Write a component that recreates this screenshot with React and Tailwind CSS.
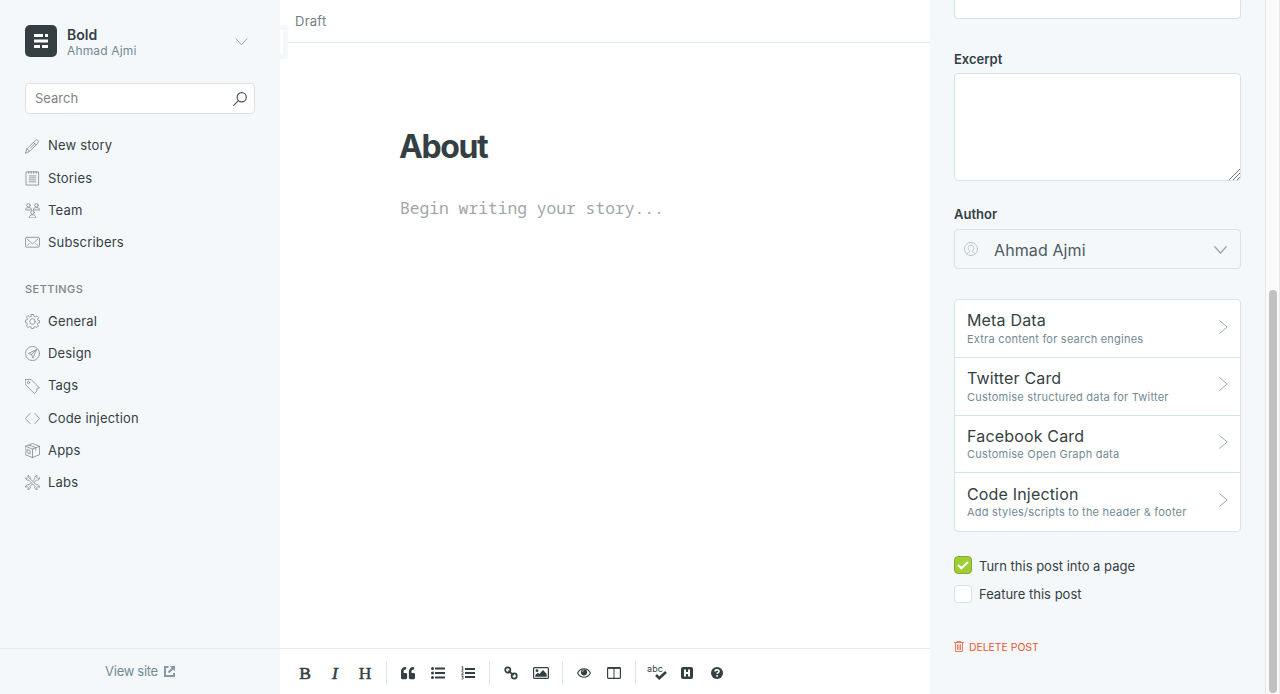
import React from "react";
import { FaQuoteLeft } from "react-icons/fa";

const Icon = ({ children, className = "size-[15px]", sw = 2, box = "0 0 32 32" }) => (
  <svg viewBox={box} className={className} fill="none" stroke="currentColor" strokeWidth={sw} strokeLinejoin="round" strokeLinecap="round" aria-hidden="true">
    {children}
  </svg>
);

const icons = {
  pen: (
    <>
      <path d="M1 30l3-9L21 4c2-2.500 4-3 6-1.500s2 4 0 6.500L10 26z" />
      <path d="M4 21l6 5M18 7l5 5M21 10l-9 9" />
    </>
  ),
  stories: (
    <>
      <path d="M3 2h26v28H3zM8 1v4M13.300 1v4M18.600 1v4M24 1v4" />
      <path d="M9 10.500h14M9 14.700h14M9 19h14M9 23.200h14" />
    </>
  ),
  team: (
    <>
      <circle cx="7.500" cy="5" r="3.800" />
      <circle cx="24.500" cy="5" r="3.800" />
      <circle cx="16" cy="20" r="3.800" />
      <path d="M1 14c0-3 2.500-4 5-4h3c2.500 0 5 1 5 4zM31 14c0-3-2.500-4-5-4h-3c-2.500 0-5 1-5 4zM9 31c0-4 3-5 5.500-6h3c2.500 1 5.500 2 5.500 6z" />
    </>
  ),
  mail: (
    <>
      <rect x="1" y="5" width="30" height="21" rx="3" />
      <path d="M5 9l11 10L27 9M5 22l4-4M27 22l-4-4" />
    </>
  ),
  gear: (
    <>
      <circle cx="16" cy="16" r="6" />
      <path d="M13.500 1h5l.8 4.200 2.700 1.100L25.600 4 29 7.400 26.700 11l1.100 2.700 3.200.8v4l-3.500.8-1.100 2.700 2.300 3.600-3.400 3.400-3.600-2.300-2.700 1.100-.8 3.200h-4.400l-.8-3.200-2.700-1.100L6.400 29 3 25.600 5.300 22l-1.100-2.700L1 18.500v-5l3.200-.8L5.300 10 3 6.400 6.400 3 10 6.300l2.700-1.100z" />
    </>
  ),
  design: (
    <>
      <circle cx="16" cy="16" r="15" />
      <path d="M24 8L7 16l7 2 2.500 7zM24 8L14 18" />
    </>
  ),
  tag: (
    <>
      <path d="M1 1h12l18 18-5.500 1v5.500L20 31 1 12z" />
      <circle cx="7.500" cy="7.500" r="2.500" />
    </>
  ),
  code: <path d="M11 5L1 16l10 11M21 5l10 11-10 11" />,
  apps: (
    <>
      <path d="M1 7l15-6 15 6v18l-15 6L1 25zM1 7l15 6 15-6M16 13v18M8 4l15 6v5M5 14l6 2v7l-6-2z" />
    </>
  ),
  labs: (
    <>
      <path d="M11 8l13 13c3-1 7 1 7 5l-4-1-2 2 1 4c-4 0-6-3-5-7L8 11c-3 1-6-1-7-5l4 1 2-2-1-4c4 0 6 4 5 7z" />
      <path d="M17 12l4-4c-1-4 1-7 5-7l-1 4 2 2 4-1c0 4-3 6-7 5l-4 4M12 17l-4 4c-4-1-7 1-7 5l4-1 2 2-1 4c4 0 6-3 5-7l4-4" />
    </>
  ),
};

const NavRow = ({ icon, children }) => (
  <div className="flex h-[32.200px] items-center gap-2 text-[13px] tracking-[0.180px] text-[#343f44]">
    <span className="text-[#7d878a]"><Icon sw={1.700}>{icons[icon]}</Icon></span>
    <span>{children}</span>
  </div>
);

const Tool = ({ children }) => <span className="flex h-5 w-[30px] items-center justify-center">{children}</span>;
const Rule = () => <span className="mx-[6px] h-6 w-px bg-[#dbe7ef]" />;

const Sidebar = () => (
  <aside className="flex h-full w-[280px] shrink-0 flex-col bg-[#f4f8fb]">
    <div className="mt-[25px] flex h-8 items-center px-[25px]">
      <div className="flex size-8 items-center justify-center rounded-[5px] bg-[#343f44]">
        <svg viewBox="0 0 14 14" className="size-[14px]" fill="#fff">
          <path d="M0 0h9v3H0zM11 0h3v3h-3zM0 5.500h14v3H0zM0 11h6v3H0zM8 11h6v3H8z" />
        </svg>
      </div>
      <div className="ml-[10px] flex flex-1 flex-col pt-[3px]">
        <span className="text-[14px] leading-4 font-semibold text-[#343f44]">Bold</span>
        <span className="text-[12px] leading-4 tracking-[0.150px] text-[#738a94]">Ahmad Ajmi</span>
      </div>
      <Icon className="mt-px mr-[7px] h-[8px] w-[13px] text-[#98a3a8]" box="0 0 13 8" sw={1}><path d="M1 .8l5.500 6L12 .8" /></Icon>
    </div>
    <div className="mx-[25px] mt-[26px] flex h-[31px] items-center justify-between rounded-[4px] border border-[#dfe1e3] bg-white pr-[7px] pl-[9px] text-[13px] text-[#808284]">
      <span>Search</span>
      <Icon className="size-[14px] text-[#4c575c]" box="0 0 14 14" sw={1.200}><circle cx="8.700" cy="5.300" r="4.600" /><path d="M5.300 8.700L.7 13.300" /></Icon>
    </div>
    <nav className="mt-[16px] px-[25px]">
      <NavRow icon="pen">New story</NavRow>
      <NavRow icon="stories">Stories</NavRow>
      <NavRow icon="team">Team</NavRow>
      <NavRow icon="mail">Subscribers</NavRow>
    </nav>
    <div className="mt-[22.200px] h-4 px-[25px] text-[11px] leading-4 font-medium tracking-[0.450px] text-[#808284]">SETTINGS</div>
    <nav className="mt-[8.700px] px-[25px]">
      <NavRow icon="gear">General</NavRow>
      <NavRow icon="design">Design</NavRow>
      <NavRow icon="tag">Tags</NavRow>
      <NavRow icon="code">Code injection</NavRow>
      <NavRow icon="apps">Apps</NavRow>
      <NavRow icon="labs">Labs</NavRow>
    </nav>
    <div className="mt-auto flex h-[46px] items-center justify-center gap-[6px] border-t border-[#dfebf2] text-[13px] tracking-[-0.300px] text-[#738a94]">
      <span className="pt-px">View site</span>
      <svg viewBox="0 0 11 11" className="size-[11px]" fill="none" stroke="#8499a3" strokeWidth="2">
        <path d="M4.500 1H1v9h9V7" /><path d="M4.500 6.500L9 2" /><path d="M5.800 0H11v5.200z" fill="#8499a3" stroke="none" />
      </svg>
    </div>
  </aside>
);

const Toolbar = () => (
  <div className="flex h-[46px] items-center border-t border-[#e3edf3] pt-[3px] pl-[10px] text-[#343f44]">
    <Tool><span className="font-['Liberation_Serif',serif] text-[17.500px] leading-5 [-webkit-text-stroke:0.6px]">B</span></Tool>
    <Tool><span className="font-['Liberation_Serif',serif] text-[17.500px] leading-5 italic [-webkit-text-stroke:0.6px]">I</span></Tool>
    <Tool><span className="font-['Liberation_Serif',serif] text-[17.500px] leading-5 [-webkit-text-stroke:0.4px]">H</span></Tool>
    <Rule />
    <Tool><FaQuoteLeft className="size-[14px]" /></Tool>
    <Tool>
      <svg viewBox="0 0 14 12" className="h-3 w-[14px]" fill="currentColor">
        <circle cx="1.500" cy="1.500" r="1.500" /><circle cx="1.500" cy="6" r="1.500" /><circle cx="1.500" cy="10.500" r="1.500" />
        <path d="M4 .5h10v2H4zM4 5h10v2H4zM4 9.500h10v2H4z" />
      </svg>
    </Tool>
    <Tool>
      <svg viewBox="0 0 14 14" className="size-[14px]" fill="currentColor">
        <path d="M4 2h10v2H4zM4 6h10v2H4zM4 10h10v2H4z" />
        <path d="M.5 1L1.700.5v3.300M.5 4h2M.4 5.700c1-.8 2-.2 1.800.6L.6 8.300h2M.4 10h1.900L1.500 11.300c1.400.2 1.100 2.200-1 1.700" fill="none" stroke="currentColor" strokeWidth=".9" />
      </svg>
    </Tool>
    <Rule />
    <Tool>
      <Icon className="size-[14px]" box="0 0 14 14" sw={1.700}>
        <circle cx="3.800" cy="4" r="2.600" /><circle cx="10.200" cy="10" r="2.600" /><path d="M5 5.200l4 3.700" />
      </Icon>
    </Tool>
    <Tool>
      <svg viewBox="0 0 16 12" className="h-3 w-4">
        <rect x=".6" y=".6" width="14.800" height="10.800" rx="1" fill="none" stroke="currentColor" strokeWidth="1.200" />
        <circle cx="4" cy="3.700" r="1.400" fill="currentColor" /><path d="M2.300 9.800V8l2.500-2.300 1.500 1.400L10 3l3.700 4v2.800z" fill="currentColor" />
      </svg>
    </Tool>
    <Rule />
    <Tool>
      <svg viewBox="0 0 14 10" className="h-[10px] w-[14px]">
        <path d="M.6 5C3.500-.6 10.500-.6 13.400 5 10.500 10.600 3.500 10.600.6 5z" fill="none" stroke="currentColor" strokeWidth="1.100" />
        <circle cx="7" cy="4.300" r="3.100" fill="currentColor" /><path d="M5.300 4.200c0-1 .7-1.700 1.700-1.700" fill="none" stroke="#fff" strokeWidth=".7" />
      </svg>
    </Tool>
    <Tool>
      <svg viewBox="0 0 14 12" className="h-3 w-[14px]" fill="none" stroke="currentColor">
        <rect x=".6" y=".6" width="12.800" height="10.800" rx=".8" strokeWidth="1.200" /><path d="M1 1h12" strokeWidth="1.800" /><path d="M7 1v10" strokeWidth="1" />
      </svg>
    </Tool>
    <Rule />
    <Tool>
      <span className="relative block h-[18px] w-5">
        <span className="absolute -top-[2px] left-0 text-[9px] leading-[14px] tracking-[0.100px]">abc</span>
        <svg viewBox="0 0 12 9" className="absolute right-0 bottom-[2px] h-[9px] w-3" fill="none" stroke="currentColor" strokeWidth="2.600"><path d="M1 4l3.300 3.200L11 1" /></svg>
      </span>
    </Tool>
    <Tool>
      <svg viewBox="0 0 12 12" className="size-3"><rect width="12" height="12" rx="2" fill="currentColor" /><path d="M4 2.500v7M8 2.500v7M4 6h4" stroke="#fff" strokeWidth="2" /></svg>
    </Tool>
    <Tool>
      <svg viewBox="0 0 12 12" className="size-3"><circle cx="6" cy="6" r="6" fill="currentColor" /><path d="M4 4.500C4.100 2.300 8 2.300 8 4.400c0 1.300-1.900 1.300-1.900 2.700M6.100 8v1.700" fill="none" stroke="#fff" strokeWidth="1.600" /></svg>
    </Tool>
  </div>
);

const Editor = () => (
  <main className="flex h-full w-[650px] shrink-0 flex-col bg-white">
    <header className="relative h-[43px] shrink-0 border-b border-[#dfebf2] pl-[15px] text-[13px] leading-[43px] tracking-[0.250px] text-[#738085]">
      Draft
      <span className="absolute top-[25px] left-0 h-[34px] w-2 rounded-r-[4px] bg-[#f4f8fb] py-[5px]"><span className="block h-6 w-[3px] bg-white" /></span>
    </header>
    <div className="flex-1 px-[120px] pt-[84px]">
      <h1 className="-ml-px text-[32px] leading-10 font-bold tracking-[-1.400px] text-[#343f44]">About</h1>
      <p className="mt-[29px] font-['Noto_Sans_Mono','DejaVu_Sans_Mono',monospace] text-[16.300px] leading-6 text-[#a0a6a9]">Begin writing your story...</p>
    </div>
    <Toolbar />
  </main>
);

const cards = [
  ["Meta Data", "Extra content for search engines"],
  ["Twitter Card", "Customise structured data for Twitter"],
  ["Facebook Card", "Customise Open Graph data"],
  ["Code Injection", "Add styles/scripts to the header & footer"],
];

const Settings = () => (
  <section className="flex h-full w-[335px] shrink-0 flex-col bg-[#f4f8fb] pr-6 pl-6 text-[#343f44]">
    <div className="h-[19px] w-full shrink-0 rounded-b-[4px] border border-t-0 border-[#d5e3eb] bg-white" />
    <div className="mt-[32px] h-4 text-[13px] leading-4 font-semibold">Excerpt</div>
    <div className="mt-[6px] flex h-[108px] items-end justify-end rounded-[4px] border border-[#d5e3eb] bg-white">
      <svg viewBox="0 0 11 11" className="size-[11px]" stroke="#777" strokeWidth="1"><path d="M0 11L11 0M4 11l7-7M8 11l3-3" /></svg>
    </div>
    <div className="mt-[25px] h-4 text-[13px] leading-4 font-semibold">Author</div>
    <div className="mt-[7px] flex h-10 items-center rounded-[4px] border border-[#d5e3eb] pr-[13px] pl-[9px]">
      <Icon className="size-[14px] text-[#b4c0c6]"><circle cx="16" cy="16" r="15" /><path d="M7 27c0-4 6-2 6-6-5-5-4-14 3-14s8 9 3 14c0 4 6 2 6 6" /></Icon>
      <span className="ml-[16px] flex-1 pt-[2px] text-[16px] leading-6 tracking-[0.100px] text-[#4d5a60]">Ahmad Ajmi</span>
      <Icon className="mt-[2px] h-[8px] w-[13px] text-[#98a9b3]" box="0 0 13 8" sw={1.400}><path d="M.8.8l5.700 6.200L12.200.8" /></Icon>
    </div>
    <div className="mt-[30px] h-[233px] shrink-0 divide-y divide-[#d5e3eb] rounded-[4px] border border-[#d5e3eb] bg-white">
      {cards.map(([title, sub]) => (
        <div key={title} className="flex h-[57.800px] items-start justify-between pt-[10.300px] pr-3 pl-3">
          <div>
            <div className="text-[16px] leading-[20.500px] tracking-[0.170px]">{title}</div>
            <div className="text-[11px] leading-[17px] tracking-[0.220px] text-[#738a94]">{sub}</div>
          </div>
          <Icon className="mt-[9.300px] h-[14px] w-[9px] shrink-0 text-[#98a9b3]" box="0 0 9 14" sw={1}><path d="M.7.7L8.200 7 .7 13.300" /></Icon>
        </div>
      ))}
    </div>
    <div className="mt-6 flex h-[18px] items-center gap-[7px] text-[13px]">
      <span className="flex size-[18px] items-center justify-center rounded-[4px] border border-[#86ad28] bg-[#9fcd34]">
        <svg viewBox="0 0 12 9" className="h-[9px] w-3" fill="none" stroke="#fff" strokeWidth="2.200"><path d="M1 4l3.300 3.300L11 1" /></svg>
      </span>
      <span className="pt-[3px]">Turn this post into a page</span>
    </div>
    <div className="mt-[11px] flex h-[18px] items-center gap-[7px] text-[13px]">
      <span className="size-[18px] rounded-[4px] border border-[#d5e3eb] bg-white" />
      <span className="pt-[2px]">Feature this post</span>
    </div>
    <div className="mt-[36px] flex h-4 items-center gap-[5px] text-[10.400px] text-[#f05230]">
      <svg viewBox="0 0 10 11" className="-mt-px h-[11px] w-[10px]" fill="none" stroke="#f27a61" strokeWidth="1"><path d="M0 1.500h10M3 1V.5h4V1M1.500 2v8.500h7V2M3.500 3.500V9M5 3.500V9M6.500 3.500V9" /></svg>
      <span className="pt-[2px]">DELETE POST</span>
    </div>
  </section>
);

export default function App() {
  return (
    <div className="flex h-[694px] w-[1280px] overflow-hidden bg-white font-['Inter','Liberation_Sans',sans-serif]">
      <Sidebar />
      <Editor />
      <Settings />
      <div className="h-full w-[15px] border-x border-[#e8e8e8] bg-[#fafafa] pt-[290px] pl-[3px]">
        <div className="h-[403px] w-2 rounded-full bg-[#c1c1c1]" />
      </div>
    </div>
  );
}
